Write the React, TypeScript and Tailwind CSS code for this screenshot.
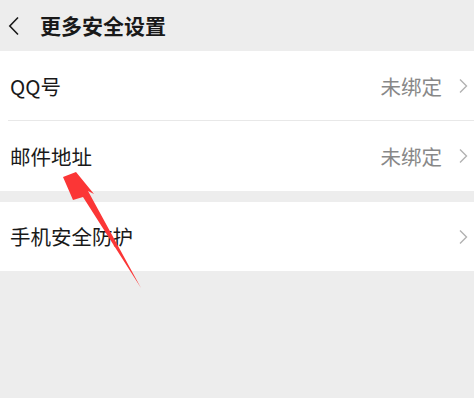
import React from 'react';

const Chevron = () => (
  <svg width="10" height="16" viewBox="0 0 10 16" fill="none">
    <path d="M2 1.5 L8.5 8 L2 14.5" stroke="#b2b2b2" strokeWidth="1.4" />
  </svg>
);

function Row({ label, value, divider }: { label: string; value?: string; divider?: boolean }) {
  return (
    <div className="relative flex h-[70px] items-center pl-[10px] pr-[6px]">
      <span className="flex-1 text-[20.5px] text-[#191919]">{label}</span>
      {value && <span className="mr-[16px] text-[20.5px] text-[#888888]">{value}</span>}
      <Chevron />
      {divider && <div className="absolute bottom-0 left-[8px] right-0 h-px bg-[#e8e8e8]" />}
    </div>
  );
}

export default function App() {
  return (
    <div
      className="relative h-[398px] w-[474px] overflow-hidden bg-[#ededed]"
      style={{ fontFamily: '"Noto Sans CJK SC", "Noto Sans", sans-serif' }}
    >
      {/* Header */}
      <div className="flex h-[51px] items-center pl-[8px]">
        <svg width="12" height="20" viewBox="0 0 12 20" fill="none">
          <path d="M10 1.5 L1.8 10 L10 18.5" stroke="#191919" strokeWidth="1.6" />
        </svg>
        <span className="ml-[20px] text-[21px] font-bold text-[#191919]">更多安全设置</span>
      </div>

      <div className="bg-white">
        <Row label="QQ号" value="未绑定" divider />
        <Row label="邮件地址" value="未绑定" />
      </div>

      <div className="mt-[11px] bg-white">
        <div className="flex h-[69px] items-center pl-[10px] pr-[6px]">
          <span className="flex-1 text-[20.5px] text-[#191919]">手机安全防护</span>
          <Chevron />
        </div>
      </div>

      {/* red annotation arrow */}
      <svg className="pointer-events-none absolute left-0 top-0" width="474" height="398" viewBox="0 0 474 398">
        <polygon
          points="63,177 76,172 94,194 88,191 141,288 83,197 73,200"
          fill="#fb3636"
        />
      </svg>
    </div>
  );
}
